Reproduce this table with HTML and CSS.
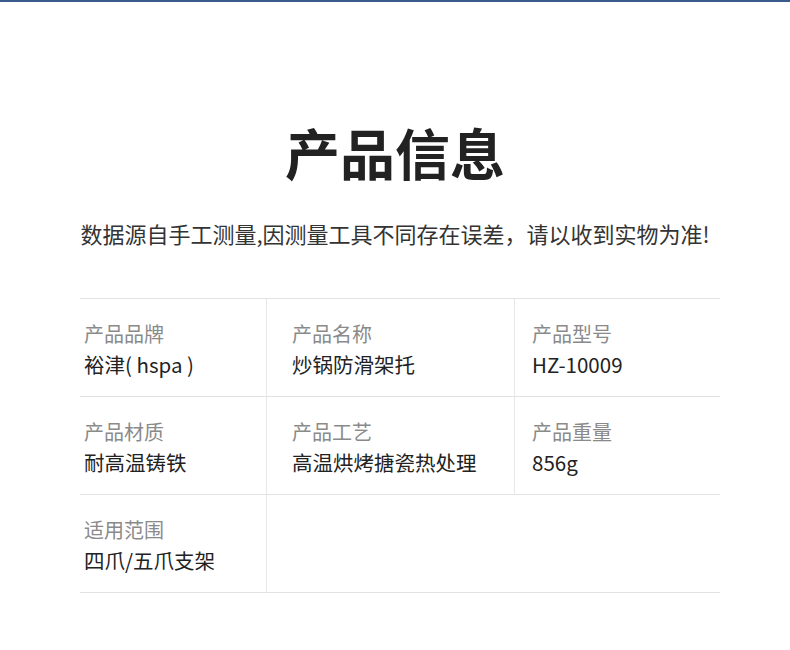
FILE: index.html
```html
<!DOCTYPE html>
<html lang="zh-CN">
<head>
<meta charset="utf-8">
<link rel="stylesheet" href="styles.css">
</head>
<body>
<div class="topbar"></div>
<main class="page">
  <h1 class="title">产品信息</h1>
  <p class="note">数据源自手工测量,因测量工具不同存在误差，请以收到实物为准!</p>
  <div class="specs">
    <div class="cell c1"><div class="label">产品品牌</div><div class="value">裕津( hspa )</div></div>
    <div class="cell c2"><div class="label">产品名称</div><div class="value">炒锅防滑架托</div></div>
    <div class="cell c3"><div class="label">产品型号</div><div class="value">HZ-10009</div></div>
    <div class="cell c1"><div class="label">产品材质</div><div class="value">耐高温铸铁</div></div>
    <div class="cell c2"><div class="label">产品工艺</div><div class="value">高温烘烤搪瓷热处理</div></div>
    <div class="cell c3"><div class="label">产品重量</div><div class="value">856g</div></div>
    <div class="cell c1"><div class="label">适用范围</div><div class="value">四爪/五爪支架</div></div>
    <div class="cell filler"></div>
  </div>
</main>
</body>
</html>
```

FILE: styles.css
```css
html, body {
  margin: 0;
  padding: 0;
  background: #ffffff;
}
body {
  font-family: "Noto Sans CJK SC", "Noto Sans", sans-serif;
  color: #222222;
}
.topbar {
  height: 2px;
  background: #3b5a8c;
}
.page {
  width: 100%;
}
.title {
  margin: 116px 0 0;
  font-size: 55px;
  line-height: 67px;
  font-weight: 700;
  text-align: center;
  color: #222222;
}
.note {
  margin: 33px 0 0;
  font-size: 22px;
  line-height: 30px;
  color: #333333;
  white-space: nowrap;
  text-align: center;
}
.specs {
  margin: 50px 70px 0 80px;
  display: grid;
  grid-template-columns: 187px 248px 205px;
  border-top: 1px solid #e2e2e2;
}
.cell {
  border-bottom: 1px solid #e2e2e2;
  padding-top: 20px;
  box-sizing: border-box;
  height: 98px;
}
.c1 {
  padding-left: 4px;
  border-right: 1px solid #e8e8e8;
}
.c2 {
  padding-left: 25px;
  border-right: 1px solid #e8e8e8;
}
.c3 {
  padding-left: 17px;
}
.filler {
  grid-column: span 2;
}
.label {
  font-size: 20px;
  line-height: 30px;
  color: #8a8a8a;
}
.value {
  font-size: 20.5px;
  line-height: 30px;
  color: #222222;
}
```
